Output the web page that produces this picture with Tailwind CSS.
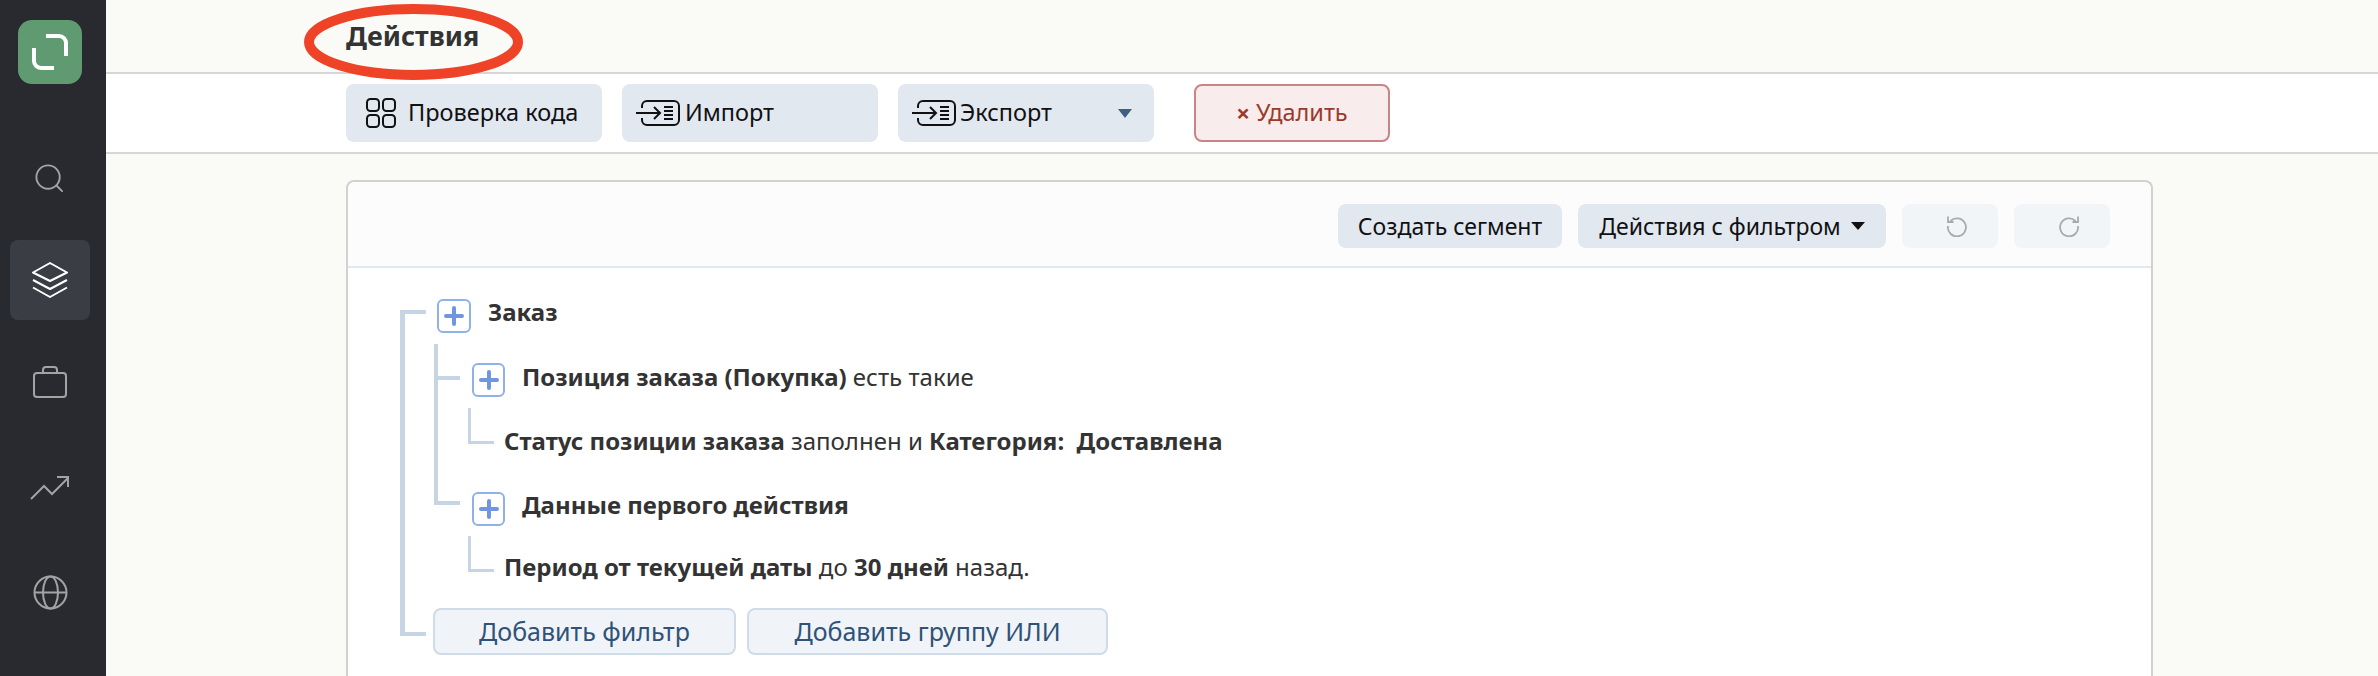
<!DOCTYPE html>
<html lang="ru">
<head>
    <meta charset="UTF-8">
    <title>Действия</title>
    <script src="https://cdn.jsdelivr.net/npm/@tailwindcss/browser@4"></script>
</head>
<body class="h-screen overflow-hidden bg-[#fafbf6] font-['Noto_Sans',sans-serif] text-[#333]">
<div class="flex h-[676px]">
    <!-- sidebar -->
    <aside class="w-[106px] shrink-0 bg-[#282a30] flex flex-col items-center pr-[6px]">
        <div class="mt-[20px] w-[64px] h-[64px] rounded-[14px] bg-[#5f9a70] flex items-center justify-center">
            <svg class="w-[38px] h-[38px]" viewBox="0 0 38 38" fill="none" stroke="#fff" stroke-width="4">
                <path d="M15 3h13a7 7 0 0 1 7 7v13"/>
                <path d="M3 15v13a7 7 0 0 0 7 7h13"/>
            </svg>
        </div>
        <div class="mt-[54px] h-[80px] w-[80px] flex items-center justify-center pr-[2px]">
            <svg class="w-[28px] h-[28px]" viewBox="0 0 30 30" fill="none" stroke="#a3a3a3" stroke-width="2" stroke-linecap="round">
                <circle cx="14" cy="14" r="12.500"/>
                <path d="M23 23l6 6"/>
            </svg>
        </div>
        <div class="mt-[22px] h-[80px] w-[80px] rounded-[8px] bg-[#3a3d44] flex items-center justify-center">
            <svg class="w-[36px] h-[36px]" viewBox="0 0 36 36" fill="none" stroke="#fff" stroke-width="2" stroke-linejoin="round">
                <path d="M18 1L35 10.500 18 19 1 10.500Z"/>
                <path d="M1 18l17 9 17-9"/>
                <path d="M1 25.500l17 9.500 17-9.500"/>
            </svg>
        </div>
        <div class="mt-[22px] h-[80px] w-[80px] flex items-center justify-center">
            <svg class="w-[36px] h-[32px]" viewBox="0 0 36 32" fill="none" stroke="#a3a3a3" stroke-width="2">
                <rect x="2" y="7" width="32" height="24" rx="3"/>
                <path d="M11 7V4a3 3 0 0 1 3-3h8a3 3 0 0 1 3 3v3"/>
            </svg>
        </div>
        <div class="mt-[26px] h-[80px] w-[80px] flex items-center justify-center">
            <svg class="w-[40px] h-[24px]" viewBox="0 0 40 24" fill="none" stroke="#a3a3a3" stroke-width="2">
                <path d="M1 23l13-13 8 8L38 2"/>
                <path d="M27 1h11v10"/>
            </svg>
        </div>
        <div class="mt-[24px] h-[80px] w-[80px] flex items-center justify-center">
            <svg class="w-[35px] h-[35px]" viewBox="0 0 35 35" fill="none" stroke="#a3a3a3" stroke-width="2">
                <circle cx="17.500" cy="17.500" r="16"/>
                <ellipse cx="17.500" cy="17.500" rx="7.500" ry="16"/>
                <path d="M1.500 17.500h32"/>
            </svg>
        </div>
    </aside>

    <main class="flex-1 min-w-0 flex flex-col">
        <!-- title -->
        <header class="relative h-[74px] shrink-0 border-b-2 border-[#d6d6d6] pl-[240px] flex items-center">
            <h1 class="text-[27px] leading-none font-bold text-[#333] -mt-[2px]">Действия</h1>
            <!-- red annotation -->
            <svg class="absolute left-[198px] top-[4px] w-[219px] h-[76px] z-10" viewBox="0 0 219 76" fill="none">
                <ellipse cx="109.500" cy="38" rx="104.500" ry="33" stroke="#ee4326" stroke-width="10"/>
            </svg>
        </header>

        <!-- toolbar -->
        <div class="h-[80px] shrink-0 bg-white border-b-2 border-[#d6d6d6] pl-[240px] pt-[10px] flex items-start text-[23.500px] text-[#111]">
            <button class="w-[256px] h-[58px] rounded-[8px] bg-[#e2e8f0] flex items-center pl-[20px]">
                <svg class="w-[30px] h-[30px] mr-[12px]" viewBox="0 0 30 30" fill="none" stroke="#111" stroke-width="2">
                    <rect x="1" y="1" width="12" height="12" rx="3.500"/>
                    <rect x="17" y="1" width="12" height="12" rx="3.500"/>
                    <rect x="1" y="17" width="12" height="12" rx="3.500"/>
                    <rect x="17" y="17" width="12" height="12" rx="3.500"/>
                </svg>
                Проверка кода
            </button>
            <button class="ml-[20px] w-[256px] h-[58px] rounded-[8px] bg-[#e2e8f0] flex items-center pl-[14px]">
                <svg class="w-[44px] h-[26px] mr-[5px]" viewBox="0 0 44 26" fill="none" stroke="#111" stroke-width="2">
                    <path d="M6 8V6a5 5 0 0 1 5-5h27a5 5 0 0 1 5 5v14a5 5 0 0 1-5 5H11a5 5 0 0 1-5-5v-2"/>
                    <path d="M0 13h24M18 7l6 6-6 6"/>
                    <path d="M28 7h9M28 11h9M28 15h9M28 19h9"/>
                </svg>
                Импорт
            </button>
            <button class="ml-[20px] w-[256px] h-[58px] rounded-[8px] bg-[#e2e8f0] flex items-center pl-[14px]">
                <svg class="w-[44px] h-[26px] mr-[4px]" viewBox="0 0 44 26" fill="none" stroke="#111" stroke-width="2">
                    <path d="M6 8V6a5 5 0 0 1 5-5h27a5 5 0 0 1 5 5v14a5 5 0 0 1-5 5H11a5 5 0 0 1-5-5v-2"/>
                    <path d="M0 13h24M18 7l6 6-6 6"/>
                    <path d="M28 7h9M28 11h9M28 15h9M28 19h9"/>
                </svg>
                Экспорт
                <svg class="ml-auto mr-[22px] w-[14px] h-[9px]" viewBox="0 0 14 9"><path d="M0 0h14L7 9z" fill="#3e5f82"/></svg>
            </button>
            <button class="ml-[40px] w-[196px] h-[58px] rounded-[8px] bg-[#f9ecec] border-2 border-[#c98484] text-[#9b3a2c] flex items-center justify-center">
                <span class="font-bold text-[24px] mr-[6px]">×</span>Удалить
            </button>
        </div>

        <!-- filter card -->
        <div class="ml-[240px] mt-[26px] w-[1807px] flex-1 bg-white border-2 border-b-0 border-[#d1d1d1] rounded-t-[8px]">
            <div class="h-[86px] bg-[#fcfcfc] border-b-2 border-[#e2e8f0] rounded-t-[8px] flex items-start justify-end pt-[22px] pr-[41px] text-[23px] text-[#111]">
                <button class="w-[224px] h-[44px] rounded-[8px] bg-[#e2e8f0]">Создать сегмент</button>
                <button class="ml-[16px] w-[308px] h-[44px] rounded-[8px] bg-[#e2e8f0] flex items-center justify-center">
                    Действия с фильтром
                    <svg class="ml-[10px] w-[14px] h-[8px]" viewBox="0 0 14 8"><path d="M0 0h14L7 8z" fill="#111"/></svg>
                </button>
                <button class="ml-[16px] w-[96px] h-[44px] rounded-[8px] bg-[#f2f5f7] flex items-center justify-center pl-[14px]">
                    <svg class="w-[22px] h-[22px]" viewBox="0 0 22 22" fill="none" stroke="#aaa" stroke-width="1.800">
                        <path d="M4.500 6A9 9 0 1 1 2 11"/>
                        <path d="M2 1.500V7h5.500"/>
                    </svg>
                </button>
                <button class="ml-[16px] w-[96px] h-[44px] rounded-[8px] bg-[#f2f5f7] flex items-center justify-center pl-[14px]">
                    <svg class="w-[22px] h-[22px]" viewBox="0 0 22 22" fill="none" stroke="#aaa" stroke-width="1.800">
                        <path d="M17.500 6A9 9 0 1 0 20 11"/>
                        <path d="M20 1.500V7h-5.500"/>
                    </svg>
                </button>
            </div>

            <!-- tree -->
            <div class="flow-root ml-[52px] mt-[42px] h-[326px] w-[1000px] border-l-[5px] border-[#c6d4e3] text-[24px] text-[#333]">
                <div class="flex items-start h-[34px] -mt-[11px]">
                    <div class="mt-[11px] w-[21px] h-[4px] bg-[#c6d4e3]"></div>
                    <span class="ml-[11px] w-[34px] h-[34px] rounded-[6px] border-2 border-[#8fb0e8] flex items-center justify-center">
                        <svg class="w-[20px] h-[20px]" viewBox="0 0 20 20" stroke="#6f96de" stroke-width="4" stroke-linecap="round"><path d="M10 2v16M2 10h16"/></svg>
                    </span>
                    <span class="ml-[17px] -mt-[2px] font-bold leading-[30px]">Заказ</span>
                </div>

                <div class="ml-[29px] mt-[11px] h-[161px] border-l-[4px] border-[#c6d4e3]">
                    <div class="flex items-start pt-[19px]">
                        <div class="mt-[13px] w-[22px] h-[4px] bg-[#c6d4e3]"></div>
                        <span class="ml-[12px] w-[33px] h-[34px] rounded-[6px] border-2 border-[#8fb0e8] flex items-center justify-center">
                            <svg class="w-[20px] h-[20px]" viewBox="0 0 20 20" stroke="#6f96de" stroke-width="4" stroke-linecap="round"><path d="M10 2v16M2 10h16"/></svg>
                        </span>
                        <span class="ml-[17px] -mt-[1px] leading-[30px]"><b>Позиция заказа (Покупка)</b> есть такие</span>
                    </div>
                    <div class="flex items-start ml-[30px] mt-[11px]">
                        <div class="w-[26px] h-[36px] border-l-[3px] border-b-[3px] border-[#c6d4e3]"></div>
                        <span class="ml-[10px] mt-[18px] leading-[30px]"><b>Статус позиции заказа</b> заполнен и <b>Категория:&nbsp; Доставлена</b></span>
                    </div>
                    <div class="flex items-start mt-[36px] h-[34px]">
                        <div class="mt-[9px] w-[22px] h-[4px] bg-[#c6d4e3]"></div>
                        <span class="ml-[12px] shrink-0 w-[33px] h-[34px] rounded-[6px] border-2 border-[#8fb0e8] flex items-center justify-center">
                            <svg class="w-[20px] h-[20px]" viewBox="0 0 20 20" stroke="#6f96de" stroke-width="4" stroke-linecap="round"><path d="M10 2v16M2 10h16"/></svg>
                        </span>
                        <span class="ml-[17px] -mt-[2px] font-bold leading-[30px]">Данные первого действия</span>
                    </div>
                </div>

                <div class="flex items-start ml-[63px] mt-[31px]">
                    <div class="w-[26px] h-[36px] border-l-[3px] border-b-[3px] border-[#c6d4e3]"></div>
                    <span class="ml-[10px] mt-[16px] leading-[30px]"><b>Период от текущей даты</b> до <b>30 дней</b> назад.</span>
                </div>

                <div class="flex items-start mt-[26px] text-[25px]">
                    <div class="mt-[24px] w-[21px] h-[4px] bg-[#c6d4e3]"></div>
                    <button class="ml-[7px] w-[303px] h-[47px] rounded-[8px] bg-[#f0f4f8] border-2 border-[#cfdbe6] text-[#2f5278]">Добавить фильтр</button>
                    <button class="ml-[11px] w-[361px] h-[47px] rounded-[8px] bg-[#f0f4f8] border-2 border-[#cfdbe6] text-[#2f5278]">Добавить группу ИЛИ</button>
                </div>
            </div>
        </div>
    </main>
</div>
</body>
</html>
